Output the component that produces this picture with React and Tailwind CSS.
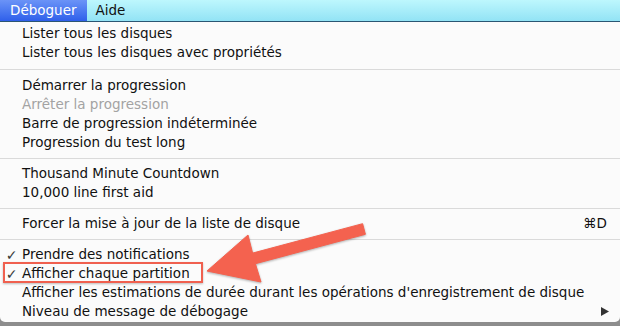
import React from 'react';

const groups = [
  [{ label: 'Lister tous les disques' }, { label: 'Lister tous les disques avec propriétés' }],
  [
    { label: 'Démarrer la progression' },
    { label: 'Arrêter la progression', disabled: true },
    { label: 'Barre de progression indéterminée' },
    { label: 'Progression du test long' },
  ],
  [{ label: 'Thousand Minute Countdown' }, { label: '10,000 line first aid' }],
  [{ label: 'Forcer la mise à jour de la liste de disque', shortcut: '⌘D' }],
  [
    { label: 'Prendre des notifications', checked: true },
    { label: 'Afficher chaque partition', checked: true },
    { label: "Afficher les estimations de durée durant les opérations d'enregistrement de disque" },
    { label: 'Niveau de message de débogage', submenu: true },
  ],
];

function MenuItem({ item }) {
  return (
    <div className="flex h-[19px] items-center pr-[13px] text-[13.5px] leading-none">
      <span className="flex w-[22px] shrink-0 justify-center pl-[1px] text-[14px] text-[#3a3a3a]">
        {item.checked ? '✓' : ''}
      </span>
      <span className={`flex-1 whitespace-nowrap ${item.disabled ? 'text-[#a3a3a3]' : 'text-[#111]'}`}>
        {item.label}
      </span>
      {item.shortcut && <span className="text-[#111]">{item.shortcut}</span>}
      {item.submenu && (
        <svg width="8" height="9" viewBox="0 0 8 9" className="mr-[-2px]">
          <polygon points="0,0 8,4.5 0,9" fill="#333" />
        </svg>
      )}
    </div>
  );
}

export default function App() {
  return (
    <div className="relative h-[326px] w-[620px] overflow-hidden bg-[#8d8d8d] font-['DejaVu_Sans',sans-serif]">
      {/* menu bar */}
      <div className="flex h-[22px] items-stretch border-b border-[#2b5673] bg-gradient-to-b from-[#bdf7fd] to-[#92e3f5] text-[13.5px] leading-none">
        <div className="flex items-center bg-gradient-to-b from-[#6b93f7] to-[#2f5fea] pl-[10px] pr-[10px] text-white">
          Déboguer
        </div>
        <div className="flex items-center pl-[9px] text-[#111]">Aide</div>
      </div>

      {/* menu */}
      <div className="rounded-b-[5px] bg-[#fbfbfb] pb-[1px] pt-[2px]">
        {groups.map((group, gi) => (
          <div key={gi}>
            {gi > 0 && (
              <div className={`flex items-center ${gi === 1 ? 'h-[14px]' : 'h-[12px]'}`}>
                <div className="h-px w-full bg-[#dadada]" />
              </div>
            )}
            {group.map((item) => (
              <MenuItem key={item.label} item={item} />
            ))}
          </div>
        ))}
      </div>

      {/* annotation */}
      <div className="absolute left-[3px] top-[262px] h-[21px] w-[200px] border-2 border-[#f0604f] shadow-[0_1px_2px_rgba(0,0,0,0.25)]" />
      <svg
        className="absolute left-0 top-0 drop-shadow-[0_1px_1px_rgba(0,0,0,0.3)]"
        width="620"
        height="326"
        viewBox="0 0 620 326"
      >
        <polygon
          points="207,271 248,235 252.6,253.1 362.6,223.7 365.4,234.3 255.4,263.7 261,282"
          fill="#f4624f"
          stroke="#f4624f"
          strokeWidth="1"
          strokeLinejoin="round"
        />
      </svg>
    </div>
  );
}
